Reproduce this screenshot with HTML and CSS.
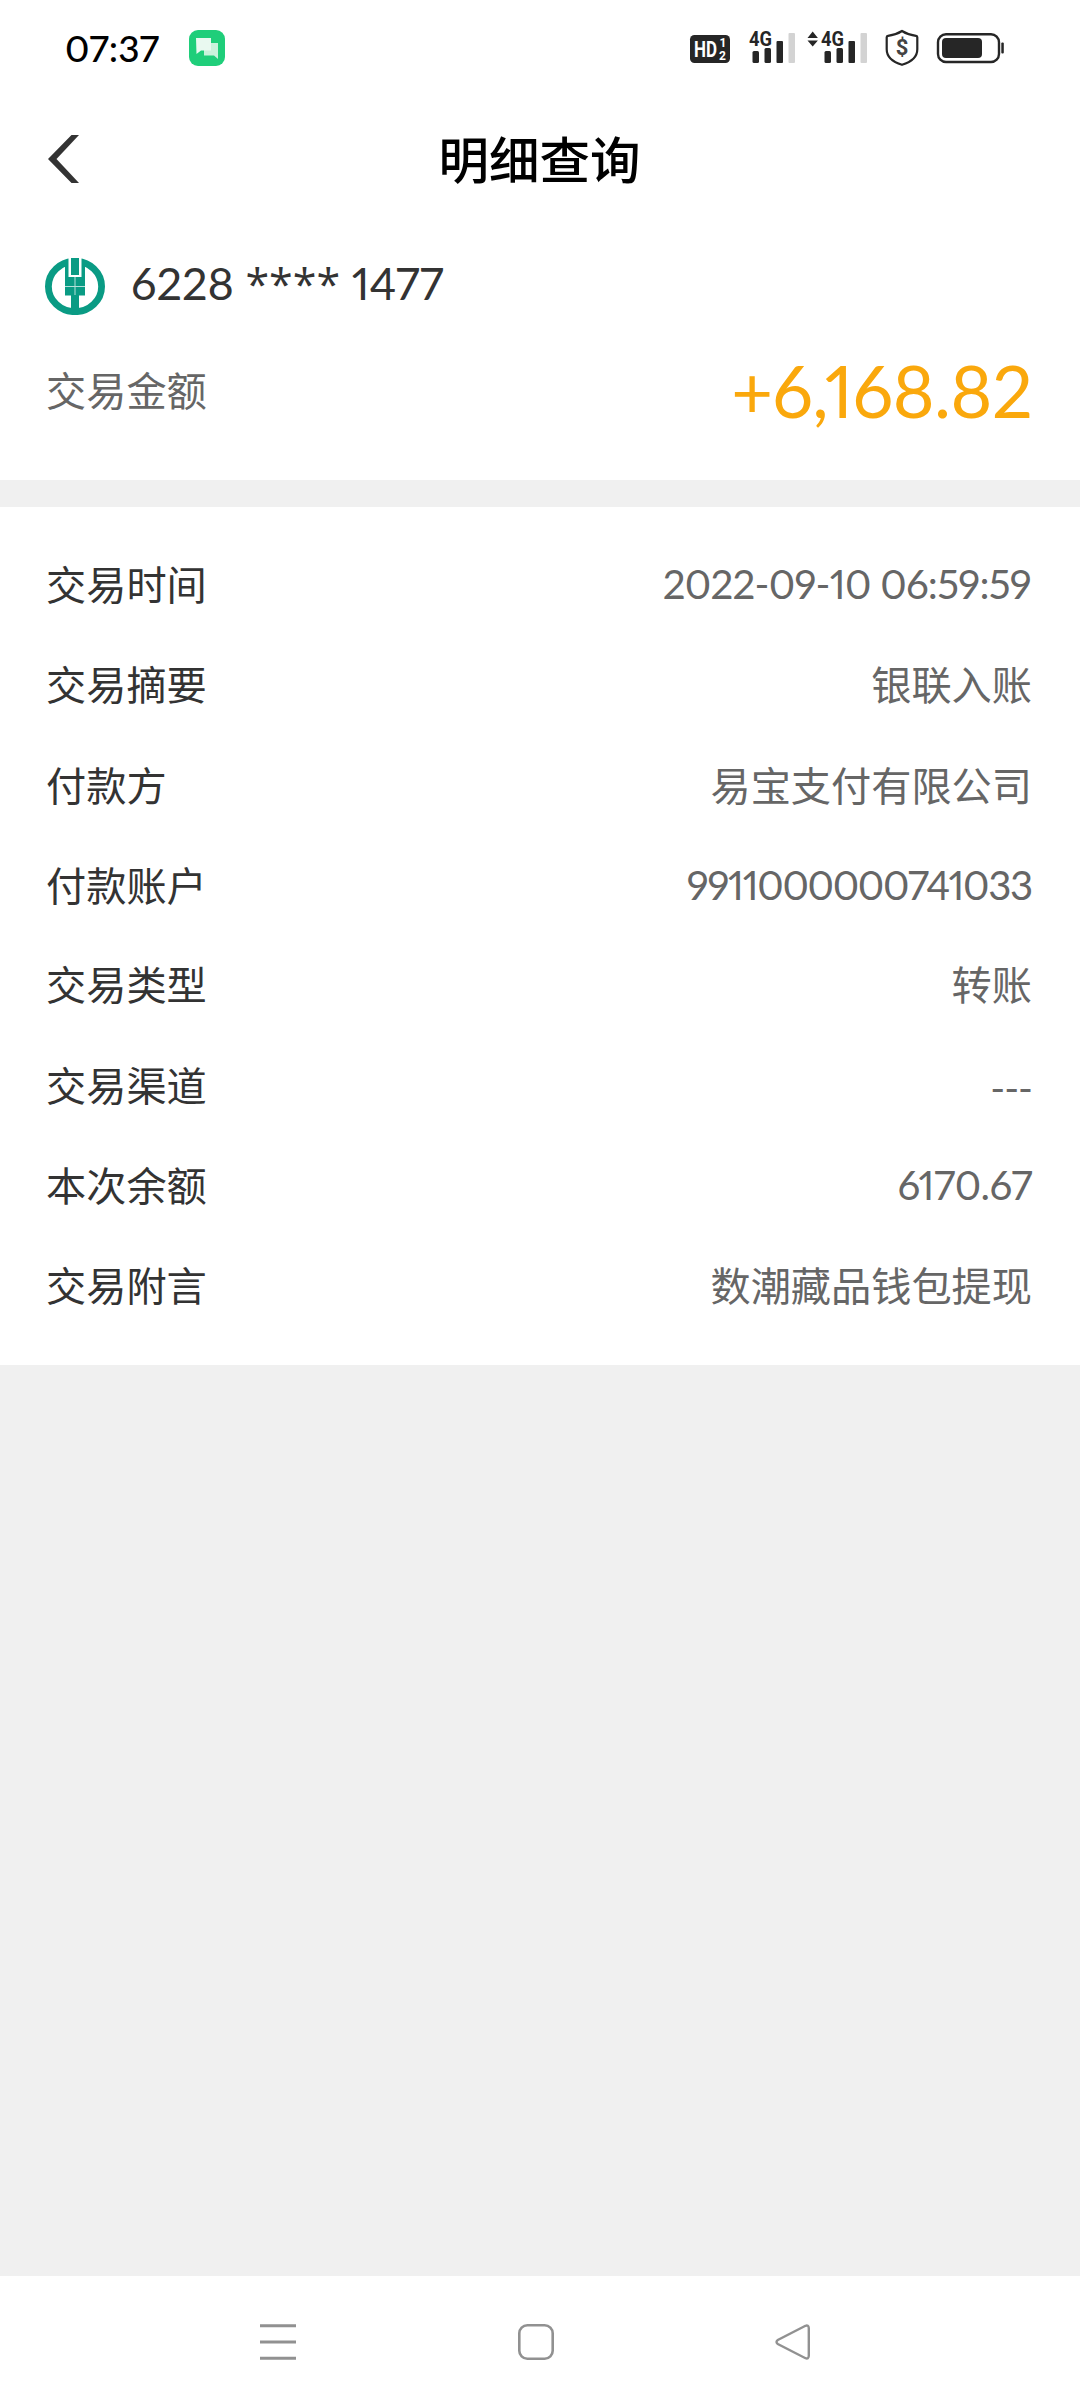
FILE: index.html
```html
<!DOCTYPE html>
<html lang="zh-CN">
<head>
    <meta charset="UTF-8">
    <meta name="viewport" content="width=device-width, initial-scale=1.0">
    <title>明细查询</title>
    <link rel="stylesheet" href="styles.css">
</head>
<body>

<div class="status-bar">
    <span class="time">07:37</span>
    <svg class="chat-icon" width="36" height="36" viewBox="0 0 36 36">
        <rect width="36" height="36" rx="9" fill="#1fce7a"/>
        <path d="M15 13h14v16l-4-3.500H15z" fill="#c9f2dc"/>
        <path d="M7 8h15v12.500H12L7.500 24z" fill="#e9f9f0"/>
    </svg>
    <svg class="status-icons" width="316" height="40" viewBox="690 28 316 40">
        <rect x="691" y="35" width="40" height="28" rx="4.500" fill="#262626"/>
        <text x="695" y="57" class="hd" textLength="23" lengthAdjust="spacingAndGlyphs">HD</text>
        <text x="720.500" y="47" class="hd-num">1</text>
        <text x="720" y="60" class="hd-num">2</text>

        <text x="750" y="46" class="net" textLength="23" lengthAdjust="spacingAndGlyphs">4G</text>
        <rect x="753.500" y="51" width="6.500" height="12" rx="1.500" fill="#262626"/>
        <rect x="765.500" y="48" width="6.500" height="15" rx="1.500" fill="#262626"/>
        <rect x="777.500" y="41" width="6.500" height="22" rx="1" fill="#262626"/>
        <rect x="789.500" y="33" width="6.500" height="30" rx="1" fill="#d3d3d3"/>

        <path d="M808.500 38l5.200-6.500 5.200 6.500zM808.500 40.500h10.400l-5.200 6z" fill="#262626"/>
        <text x="822" y="46" class="net" textLength="23" lengthAdjust="spacingAndGlyphs">4G</text>
        <rect x="825.500" y="51" width="6.500" height="12" rx="1.500" fill="#262626"/>
        <rect x="837.500" y="48" width="6.500" height="15" rx="1.500" fill="#262626"/>
        <rect x="849.500" y="41" width="6.500" height="22" rx="1" fill="#262626"/>
        <rect x="861.500" y="33" width="6.500" height="30" rx="1" fill="#d3d3d3"/>

        <path d="M903 31c4 2.500 9 4.300 14 4.800q1.300.2 1.300 1.500v12c0 8-7 13-15.300 15.500-8.300-2.500-15.300-7.500-15.300-15.500v-12q0-1.300 1.300-1.500c5-.5 10-2.300 14-4.800z" fill="none" stroke="#262626" stroke-width="2.200"/>
        <text x="903" y="54.500" class="dollar" text-anchor="middle">$</text>

        <rect x="939" y="34.200" width="61" height="27.800" rx="8" fill="none" stroke="#262626" stroke-width="2.400"/>
        <rect x="943" y="38" width="40" height="20" rx="4" fill="#262626"/>
        <rect x="1002.300" y="42.500" width="2.500" height="11" rx="1" fill="#262626"/>
    </svg>
</div>

<header class="header">
    <a class="back" href="#" aria-label="返回">
        <svg width="32" height="50" viewBox="0 0 32 50">
            <path d="M23.500 1h7.500L8.500 25l22.500 24h-7.500L0 25z" fill="#333"/>
        </svg>
    </a>
    <h1>明细查询</h1>
</header>

<section class="summary">
    <div class="card-line">
        <svg class="bank-logo" width="60" height="57" viewBox="0 0 60 57">
            <ellipse cx="30" cy="28.500" rx="26.600" ry="25.200" fill="#fff" stroke="#0a9b84" stroke-width="6.800"/>
            <path d="M20 3h20v34.500H20z" fill="#0a9b84"/>
            <path d="M26 37h8v17h-8z" fill="#0a9b84"/>
            <path d="M23.500 0h13v19h-13z" fill="#fff"/>
            <path d="M26 0h8v17h-8z" fill="#0a9b84"/>
            <path d="M20 28.500h20M30 19v18" stroke="#b5e0d9" stroke-width="1" fill="none"/>
        </svg>
        <span class="card-no">6228 <span class="stars">****</span> 1477</span>
    </div>
    <div class="amount-line">
        <span class="amount-label">交易金额</span>
        <span class="amount">+6,168.82</span>
    </div>
</section>

<section class="details">
    <div class="row"><span>交易时间</span><span class="value date">2022-09-10 06:59:59</span></div>
    <div class="row"><span>交易摘要</span><span class="value">银联入账</span></div>
    <div class="row"><span>付款方</span><span class="value">易宝支付有限公司</span></div>
    <div class="row"><span>付款账户</span><span class="value account">9911000000741033</span></div>
    <div class="row"><span>交易类型</span><span class="value">转账</span></div>
    <div class="row"><span>交易渠道</span><span class="value dashes">---</span></div>
    <div class="row"><span>本次余额</span><span class="value balance">6170.67</span></div>
    <div class="row"><span>交易附言</span><span class="value">数潮藏品钱包提现</span></div>
</section>

<nav class="nav-bar">
    <svg width="36" height="36" viewBox="0 0 36 36">
        <path d="M0 1.700h36M0 18h36M0 34.300h36" stroke="#919191" stroke-width="3"/>
    </svg>
    <svg width="36" height="36" viewBox="0 0 36 36">
        <rect x="1.300" y="1.300" width="33.400" height="33.400" rx="8" fill="none" stroke="#919191" stroke-width="2.600"/>
    </svg>
    <svg width="36" height="36" viewBox="0 0 36 36">
        <path d="M30.500 1.800L2.800 16q-2.600 2 0 4l27.700 14.200q3 1 3.300-2.200V4q-.3-3.200-3.300-2.200z" fill="none" stroke="#919191" stroke-width="2.400"/>
    </svg>
</nav>

</body>
</html>
```

FILE: styles.css
```css
* {
    box-sizing: border-box;
}

body {
    display: flex;
    flex-direction: column;
    height: 2408px;
    margin: 0;
    font-family: Lato, "Noto Sans CJK SC", sans-serif;
    font-variant-numeric: proportional-nums;
    background-color: #f0f0f0;
    color: #333;
}

.status-bar {
    display: flex;
    align-items: center;
    height: 96px;
    padding: 0 75px 0 65px;
    background-color: #fff;
}

.time {
    width: 124px;
    padding-bottom: 2px;
    font-size: 37px;
    font-weight: 500;
    color: #000;
}

.status-icons {
    margin-left: auto;
}

.hd {
    font: 700 22px Roboto, sans-serif;
    fill: #fff;
}

.hd-num {
    font: 700 12px/12px Roboto, sans-serif;
    fill: #fff;
}

.net {
    font: 700 21px Roboto, sans-serif;
    fill: #262626;
}

.dollar {
    font: 700 22px Roboto, sans-serif;
    fill: #444;
}

.header {
    display: grid;
    grid-template-columns: 32px 1fr 32px;
    align-items: center;
    height: 126px;
    padding: 2px 49px 0 48px;
    background-color: #fff;
}

.back {
    display: flex;
    margin-bottom: 3px;
}

.header h1 {
    margin: 0;
    text-align: center;
    font-size: 50.5px;
    line-height: 60px;
    font-weight: 500;
    color: #000;
}

.summary {
    height: 258px;
    padding: 26px 48px 0 45px;
    background-color: #fff;
}

.card-line {
    display: flex;
    align-items: center;
    gap: 26px;
    height: 76px;
}

.card-no {
    padding-bottom: 6px;
    font-size: 45px;
}

.stars {
    font-family: "Open Sans", sans-serif;
    font-size: 43px;
    line-height: 1;
}

.amount-line {
    display: flex;
    justify-content: space-between;
    align-items: center;
    height: 132px;
    font-size: 40.200px;
    color: #666;
}

.amount-label {
    padding: 0 0 4px 1px;
}

.amount {
    font-size: 72px;
    letter-spacing: -0.700px;
    color: #faa80c;
}

.details {
    display: grid;
    grid-template-rows: 100px 100px 102px 98px 100px 102px 98px 102px;
    height: 858px;
    margin-top: 27px;
    padding: 25px 48px 0 46px;
    background-color: #fff;
    font-size: 40.200px;
}

.row {
    display: flex;
    justify-content: space-between;
    align-items: center;
}

.value {
    color: #666;
}

.date {
    padding: 3px 1px 0 0;
    letter-spacing: -0.750px;
}

.account {
    padding-top: 2px;
    letter-spacing: -1.300px;
}

.balance {
    padding-top: 3px;
    letter-spacing: -0.500px;
}

.dashes {
    padding-top: 8px;
    letter-spacing: -1px;
}

.nav-bar {
    display: flex;
    justify-content: space-between;
    align-items: center;
    height: 132px;
    margin-top: auto;
    padding: 0 269px 0 260px;
    background-color: #fff;
}
```
